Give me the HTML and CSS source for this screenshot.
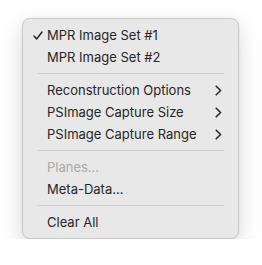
FILE: index.html
```html
<!DOCTYPE html>
<html lang="en">
<head>
  <meta charset="UTF-8" />
  <title>Context Menu</title>
  <link rel="stylesheet" href="styles.css">
</head>
<body>
  <div class="menu">
    <div class="menu-item checked">
      <span class="check">
        <svg width="10" height="9" viewBox="0 0 10 9"><path d="M1 5 L3.6 8 L9 1" fill="none" stroke="#262626" stroke-width="1.5" stroke-linecap="round" stroke-linejoin="round"/></svg>
      </span>
      <span class="label">MPR Image Set #1</span>
    </div>
    <div class="menu-item">
      <span class="check"></span>
      <span class="label">MPR Image Set #2</span>
    </div>

    <div class="separator"></div>

    <div class="menu-item">
      <span class="check"></span>
      <span class="label">Reconstruction Options</span>
      <svg class="chevron" width="7" height="11" viewBox="0 0 7 11"><path d="M1.2 1.2 L5.6 5.5 L1.2 9.8" fill="none" stroke="#2b2b2b" stroke-width="1.6" stroke-linecap="round" stroke-linejoin="round"/></svg>
    </div>
    <div class="menu-item">
      <span class="check"></span>
      <span class="label">PSImage Capture Size</span>
      <svg class="chevron" width="7" height="11" viewBox="0 0 7 11"><path d="M1.2 1.2 L5.6 5.5 L1.2 9.8" fill="none" stroke="#2b2b2b" stroke-width="1.6" stroke-linecap="round" stroke-linejoin="round"/></svg>
    </div>
    <div class="menu-item">
      <span class="check"></span>
      <span class="label">PSImage Capture Range</span>
      <svg class="chevron" width="7" height="11" viewBox="0 0 7 11"><path d="M1.2 1.2 L5.6 5.5 L1.2 9.8" fill="none" stroke="#2b2b2b" stroke-width="1.6" stroke-linecap="round" stroke-linejoin="round"/></svg>
    </div>

    <div class="separator"></div>

    <div class="menu-item disabled">
      <span class="check"></span>
      <span class="label">Planes...</span>
    </div>
    <div class="menu-item">
      <span class="check"></span>
      <span class="label">Meta-Data...</span>
    </div>

    <div class="separator"></div>

    <div class="menu-item">
      <span class="check"></span>
      <span class="label">Clear All</span>
    </div>
  </div>
</body>
</html>
```

FILE: styles.css
```css
body {
  margin: 0;
  padding: 18px 0 0 22px;
  background: #ffffff;
  font-family: 'Inter', 'Liberation Sans', sans-serif;
}

.menu {
  width: 215px;
  padding: 5px 0 5px;
  background: #e8e8e8;
  border: 1px solid #c9c9c9;
  border-radius: 8px;
  box-shadow: 0 8px 22px rgba(0, 0, 0, 0.16), 0 0 2px rgba(0, 0, 0, 0.08);
}

.menu-item {
  display: flex;
  align-items: center;
  height: 22px;
  padding: 0 16px 0 10px;
  font-size: 13px;
  color: #262626;
}

.check {
  display: flex;
  align-items: center;
  width: 14px;
  flex-shrink: 0;
}

.label {
  flex: 1;
}

.disabled {
  color: #a9a9a9;
}

.chevron {
  display: block;
}

.separator {
  height: 1px;
  margin: 5px 14px 5px 14px;
  background: #d1d1d1;
}
```
